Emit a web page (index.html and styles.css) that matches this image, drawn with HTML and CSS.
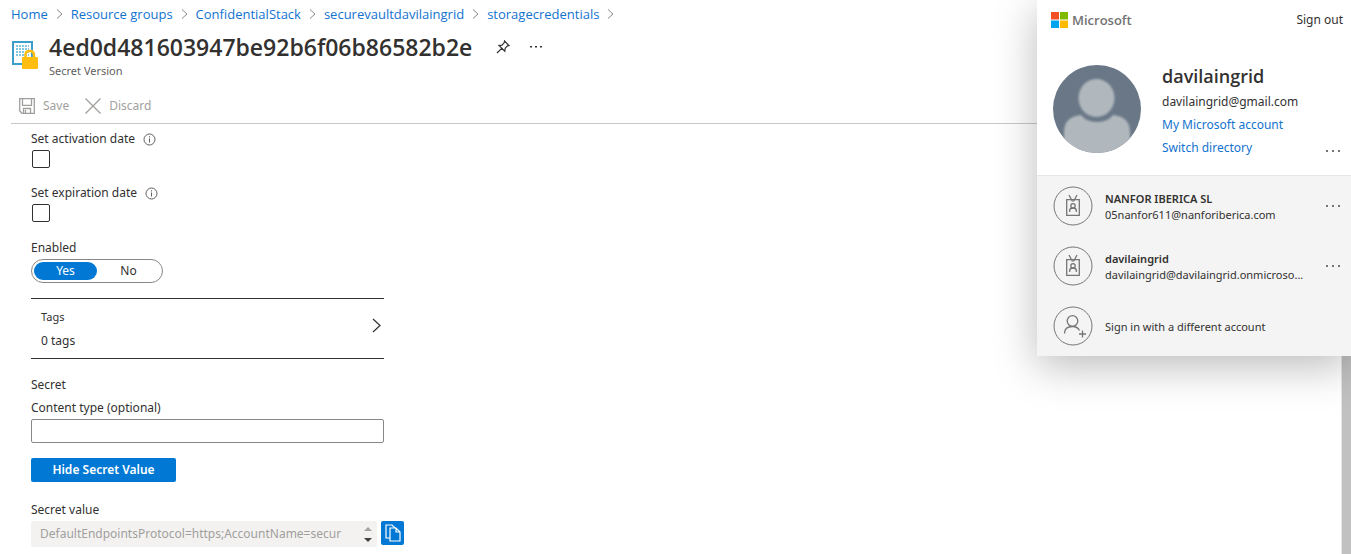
FILE: index.html
```html
<!DOCTYPE html>
<html lang="en">
<head>
<meta charset="utf-8">
<title>Secret Version</title>
<link rel="stylesheet" href="styles.css">
</head>
<body>
<svg class="defs" aria-hidden="true">
  <symbol id="chevron" viewBox="0 0 8 12"><path d="M1.500 1.500 6.500 6l-5 4.500" fill="none" stroke="currentColor"/></symbol>
  <symbol id="info" viewBox="0 0 13 13"><circle cx="6.500" cy="6.500" r="5.500" fill="none" stroke="currentColor"/><path d="M6.500 5.500v4M6.500 3.300v1.200" stroke="currentColor"/></symbol>
  <symbol id="dots" viewBox="0 0 16 4"><path d="M1 1h2v2H1zM7 1h2v2H7zM13 1h2v2h-2z" fill="currentColor"/></symbol>
  <symbol id="badge" viewBox="0 0 40 40"><g fill="none" stroke="currentColor"><circle cx="20" cy="20" r="19"/><path stroke-width="1.300" d="M13.700 13.700h12.600v15.600H13.700zM16 9l3.500 6.500M24 9l-3.500 6.500M16.700 26v-1.500q0-2.500 3.300-2.500t3.300 2.500V26"/><circle cx="20" cy="19.800" r="2.200" stroke-width="1.300"/></g></symbol>
</svg>
<div class="page">
  <main class="blade">
    <nav class="crumbs" aria-label="Breadcrumb">
      <a href="#">Home</a><svg class="crumb-arrow"><use href="#chevron"/></svg>
      <a href="#">Resource groups</a><svg class="crumb-arrow"><use href="#chevron"/></svg>
      <a href="#">ConfidentialStack</a><svg class="crumb-arrow"><use href="#chevron"/></svg>
      <a href="#">securevaultdavilaingrid</a><svg class="crumb-arrow"><use href="#chevron"/></svg>
      <a href="#">storagecredentials</a><svg class="crumb-arrow"><use href="#chevron"/></svg>
    </nav>
    <header class="head">
      <svg class="head-icon" viewBox="0 0 26 29">
        <path d="M1 2h19v22H1z" fill="#fff" stroke="#3d9fc9" stroke-width="2"/>
        <path d="M4 6h13M4 9h13M4 12h13M4 15h13" stroke="#5ab4d8" stroke-width="1.700" stroke-dasharray="2 1"/>
        <path d="M13.500 19v-4q0-4 4.200-4T22 15v4" fill="none" stroke="#ffbd0f" stroke-width="2.500"/>
        <rect x="10" y="17" width="16" height="12" rx="1" fill="#ffbd0f"/>
      </svg>
      <div class="head-text">
        <div class="title-row">
          <h1 class="title">4ed0d481603947be92b6f06b86582b2e</h1>
          <button class="icon-btn" aria-label="Pin"><svg class="pin" viewBox="0 0 14 14"><path d="M8.500 1 13 5.500l-1.500.3-2.300 2.400-.4 3L3 5.500l3-.4 2.300-2.500zM5.700 8.300 1 13" fill="none" stroke="currentColor" stroke-width="1.200"/></svg></button>
          <button class="icon-btn" aria-label="More"><svg class="more" viewBox="0 0 12 4"><path d="M0 1h2v1.500H0zM5 1h2v1.500H5zM10 1h2v1.500h-2z" fill="currentColor"/></svg></button>
        </div>
        <p class="subtitle">Secret Version</p>
      </div>
    </header>
    <div class="toolbar">
      <button class="tool" disabled><svg class="tool-icon" viewBox="0 0 16 16"><path d="M.7.700h14.600v14.600H3L.700 13zM3.500.700v6.600h9V.700M4.500 15v-4.500h7V15M6.500 12v3" fill="none" stroke="currentColor" stroke-width="1.300"/></svg>Save</button>
      <button class="tool" disabled><svg class="tool-icon" viewBox="0 0 16 16"><path d="m.5.500 15 15M15.500.500l-15 15" stroke="currentColor" stroke-width="1.300"/></svg>Discard</button>
    </div>
    <form class="form">
      <div class="check">
        <div class="label-row"><label for="act">Set activation date</label><svg class="info"><use href="#info"/></svg></div>
        <input class="box" type="checkbox" id="act">
      </div>
      <div class="check">
        <div class="label-row"><label for="exp">Set expiration date</label><svg class="info"><use href="#info"/></svg></div>
        <input class="box" type="checkbox" id="exp">
      </div>
      <div class="enabled" id="en">Enabled</div>
      <div class="toggle" role="group" aria-labelledby="en">
        <button type="button" class="seg seg-on" aria-pressed="true">Yes</button>
        <button type="button" class="seg" aria-pressed="false">No</button>
      </div>
      <button type="button" class="tags">
        <span class="tags-text"><span class="tags-name">Tags</span><span>0 tags</span></span>
        <svg class="tags-arrow" viewBox="0 0 9 15"><path d="m1 1 7 6.500L1 14" fill="none" stroke="currentColor" stroke-width="1.200"/></svg>
      </button>
      <h2 class="section">Secret</h2>
      <label class="field-label" for="ct">Content type (optional)</label>
      <input class="text" type="text" id="ct">
      <button type="button" class="primary">Hide Secret Value</button>
      <label class="field-label" for="sv">Secret value</label>
      <div class="secret-row">
        <div class="secret">
          <input class="secret-text" id="sv" type="text" value="DefaultEndpointsProtocol=https;AccountName=secur" disabled>
          <svg class="spin" viewBox="0 0 8 18"><path d="m0 6 4-4 4 4z" fill="#a3a3a3"/><path d="m0 13 4 4 4-4z" fill="#404040"/></svg>
        </div>
        <button type="button" class="copy" aria-label="Copy"><svg class="copy-icon" viewBox="0 0 16 18"><g fill="#0078d4" stroke="#fff" stroke-width="1.200"><path d="M1 1h6l3 3v10H1z"/><path d="M5 4h6l4 4v9H5zM11 4v4h4"/></g></svg></button>
      </div>
    </form>
  </main>
  <div class="rail"></div>
</div>
<aside class="account">
  <section class="current">
    <div class="brand-row">
      <div class="brand"><svg class="logo" viewBox="0 0 17 16"><path d="M0 0h8v7.500H0z" fill="#f25022"/><path d="M9 0h8v7.500H9z" fill="#7fba00"/><path d="M0 8.500h8V16H0z" fill="#00a4ef"/><path d="M9 8.500h8V16H9z" fill="#ffb900"/></svg>Microsoft</div>
      <a class="signout" href="#">Sign out</a>
    </div>
    <div class="profile">
      <svg class="avatar" viewBox="0 0 88 88"><defs><clipPath id="round"><circle cx="44" cy="44" r="44"/></clipPath><filter id="soft"><feGaussianBlur stdDeviation="1"/></filter></defs><g clip-path="url(#round)"><path d="M0 0h88v88H0z" fill="#697787"/><g filter="url(#soft)" fill="#b1b8bd"><path d="M11 95V67q0-15 17-17 5 7 16 7t16-7q17 2 17 17v28z"/><ellipse cx="43.500" cy="33" rx="18" ry="19"/></g></g></svg>
      <div class="who">
        <strong class="who-name">davilaingrid</strong>
        <span>davilaingrid@gmail.com</span>
        <a href="#">My Microsoft account</a>
        <a href="#">Switch directory</a>
      </div>
      <button class="dots-btn low" aria-label="More"><svg class="dots"><use href="#dots"/></svg></button>
    </div>
  </section>
  <section class="others">
    <div class="acct"><svg class="acct-icon"><use href="#badge"/></svg><div class="acct-text"><strong>NANFOR IBERICA SL</strong><span class="mail">05nanfor611@nanforiberica.com</span></div><button class="dots-btn" aria-label="More"><svg class="dots"><use href="#dots"/></svg></button></div>
    <div class="acct"><svg class="acct-icon"><use href="#badge"/></svg><div class="acct-text"><strong>davilaingrid</strong><span class="mail">davilaingrid@davilaingrid.onmicroso...</span></div><button class="dots-btn" aria-label="More"><svg class="dots"><use href="#dots"/></svg></button></div>
    <a class="acct other" href="#"><svg class="acct-icon" viewBox="0 0 40 40"><g fill="none" stroke="currentColor"><circle cx="20" cy="20" r="19"/><g stroke-width="1.300"><circle cx="19.500" cy="15" r="5.300"/><path d="M11.500 27.500q0-7 8-7 5 0 7 4M26 28h7M29.500 24.500v7"/></g></g></svg><span class="acct-text">Sign in with a different account</span></a>
  </section>
</aside>
</body>
</html>
```
FILE: styles.css
```css
* { box-sizing: border-box; }
body { margin: 0; font: 12px/18px "Noto Sans", "Open Sans", sans-serif; color: #323130; background: #fff; overflow: hidden; }
button, input { font: inherit; color: inherit; margin: 0; }
button { padding: 0; border: 0; background: none; }
a { color: #1273cf; text-decoration: none; }
svg { display: block; flex: none; }
h1, h2, p { margin: 0; }
.defs { position: absolute; width: 0; height: 0; }
.page { display: flex; min-height: 100vh; }
.blade { flex: 1; min-width: 0; padding-left: 11px; }
.rail { width: 10px; background: #c1c1c1; border-left: 1px solid #e4e4e4; }

.crumbs { display: flex; align-items: center; gap: 7px; height: 28px; font-family: "Open Sans", "Noto Sans", sans-serif; font-size: 13px; }
.crumb-arrow { width: 9px; height: 12px; color: #8a8886; }
.head { display: flex; gap: 11px; height: 58px; padding: 4px 0 0 1px; }
.head-icon { width: 26px; height: 29px; margin-top: 8px; }
.title-row { display: flex; align-items: center; height: 30px; gap: 20px; }
.title { font-family: "Open Sans", "Noto Sans", sans-serif; font-size: 23px; line-height: 30px; font-weight: 600; margin-right: 4px; }
.pin { width: 14px; height: 14px; }
.more { width: 12px; height: 4px; }
.subtitle { font-size: 11px; color: #605e5c; }
.toolbar { display: flex; align-items: center; gap: 16px; height: 38px; padding: 2px 0 0 8px; border-bottom: 1px solid #c8c8c8; }
.tool { display: flex; align-items: center; gap: 8px; color: #a19f9d; }
.tool-icon { width: 16px; height: 16px; }

.form { display: flex; flex-direction: column; width: 373px; padding: 6px 0 0 20px; }
.check { height: 54px; }
.check + .check { height: 55px; }
.label-row { display: flex; align-items: center; gap: 8px; height: 18px; }
.info { width: 13px; height: 13px; color: #605e5c; }
.box { display: block; appearance: none; width: 18px; height: 18px; margin: 2px 0 0 1px; border: 1px solid #323130; border-radius: 2px; }
.toggle { display: flex; width: 132px; height: 24px; margin-top: 2px; padding: 2px; border: 1px solid #8a8886; border-radius: 12px; }
.seg { flex: 1; border-radius: 9px; }
.seg-on { background: #0078d4; color: #fff; }
.tags { display: flex; justify-content: space-between; height: 61px; margin-top: 15px; padding: 9px 3px 0 10px; border: solid #323130; border-width: 1px 0; text-align: left; }
.tags-text { display: flex; flex-direction: column; gap: 6px; }
.tags-name { font-size: 11px; }
.tags-arrow { width: 9px; height: 15px; margin-top: 10px; }
.section { margin-top: 17px; font-size: 12px; line-height: 18px; font-weight: 400; }
.field-label { margin-top: 5px; }
.text { height: 24px; margin-top: 2px; border: 1px solid #8a8886; border-radius: 2px; }
.primary { align-self: flex-start; width: 145px; height: 24px; margin: 15px 0 14px; border-radius: 2px; background: #0078d4; color: #fff; font-weight: 600; }
.secret-row { display: flex; gap: 4px; margin: 2px -20px 0 0; }
.secret { display: flex; align-items: center; width: 346px; height: 26px; padding: 0 5px 0 9px; background: #f3f2f1; border-radius: 2px; }
.secret-text { flex: 1; min-width: 0; padding: 0; border: 0; background: none; color: #a19f9d; }
.spin { width: 8px; height: 18px; }
.copy { display: grid; place-items: center; width: 23px; height: 24px; border-radius: 2px; background: #0078d4; }
.copy-icon { width: 16px; height: 18px; }

.account { position: absolute; top: 0; right: 0; width: 314px; background: #fff; box-shadow: 0 10px 40px rgba(0, 0, 0, .27); }
.current { height: 176px; border-bottom: 1px solid #e6e6e6; }
.brand-row { display: flex; justify-content: space-between; padding: 10px 8px 0 14px; }
.brand { display: flex; align-items: center; gap: 4px; font-family: "Open Sans", "Noto Sans", sans-serif; font-size: 13px; font-weight: 600; color: #737373; }
.logo { width: 17px; height: 16px; }
.signout { color: #323130; padding-top: 1px; }
.profile { display: flex; padding: 35px 10px 0 16px; }
.avatar { width: 88px; height: 88px; margin-top: 1px; }
.who { display: flex; flex-direction: column; flex: 1; gap: 5px; margin-left: 21px; }
.who-name { font-family: "Open Sans", "Noto Sans", sans-serif; font-size: 18px; line-height: 24px; font-weight: 600; }
.dots-btn { color: #767676; margin-left: auto; }
.low { align-self: flex-end; padding-bottom: 4px; }
.dots { width: 16px; height: 4px; }
.others { background: #f4f4f4; }
.acct { display: flex; align-items: center; height: 60px; padding: 0 10px 0 16px; font-size: 11px; line-height: 16px; }
.acct-icon { width: 40px; height: 40px; color: #767676; }
.acct-text { display: flex; flex-direction: column; margin-left: 12px; padding-top: 1px; white-space: nowrap; }
.acct strong { font-weight: 600; }
.other { color: #323130; }
```
